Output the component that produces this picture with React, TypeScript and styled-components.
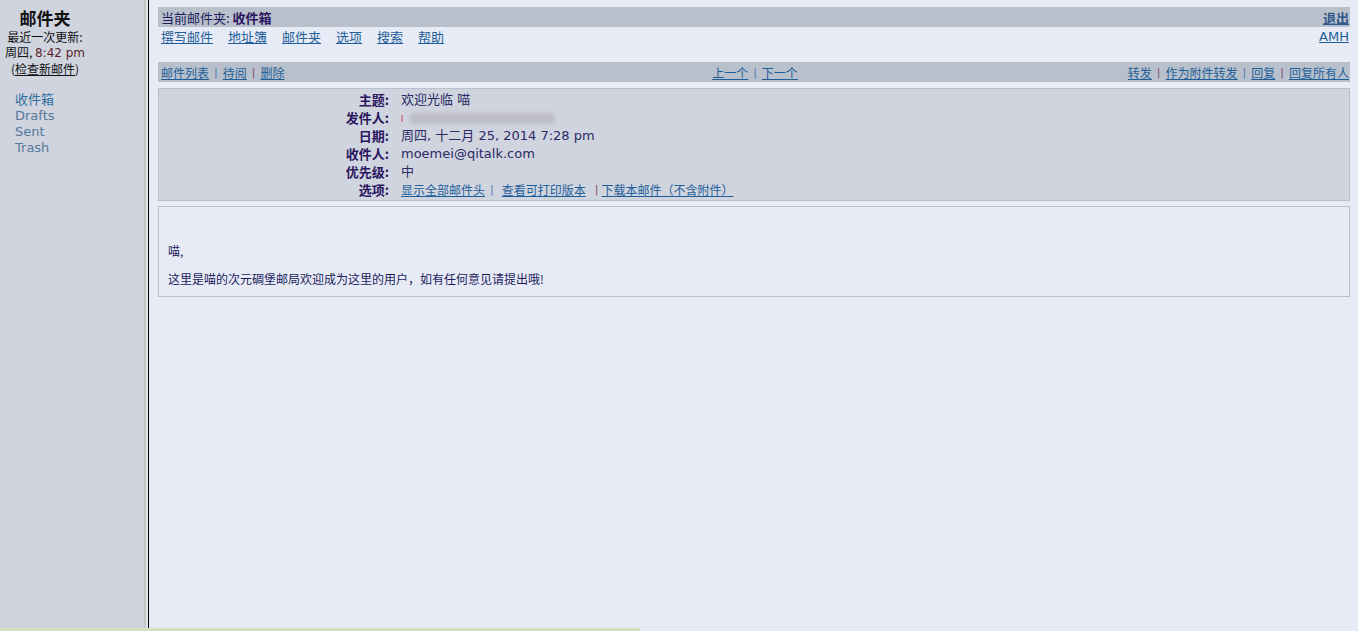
import React from "react";
import styled, { createGlobalStyle } from "styled-components";

const GlobalStyle = createGlobalStyle`
  html, body {
    margin: 0;
    padding: 0;
    background: #e7ebf6;
    font-family: "DejaVu Sans", "Noto Sans CJK SC", sans-serif;
    font-size: 13px;
    color: #1c1c5c;
  }
  #root {
    height: 100vh;
  }
`;

const Page = styled.div`
  display: flex;
  height: 100vh;
  position: relative;
  overflow: hidden;
`;

const Sidebar = styled.div`
  width: 144px;
  flex-shrink: 0;
  background: #cfd4df;
  border-right: 2px solid #c6c6c6;
  box-sizing: content-box;
  display: flex;
  flex-direction: column;
`;

const Divider = styled.div`
  width: 3px;
  flex-shrink: 0;
  background: #e7ebf6;
  border-left: 1px solid #e1e1e1;
  border-right: 1px solid #000;
  box-sizing: border-box;
`;

const SideHead = styled.div`
  width: 90px;
  display: flex;
  flex-direction: column;
  align-items: center;
`;

const SideTitle = styled.div`
  font-family: "Noto Sans CJK SC", sans-serif;
  font-weight: 700;
  font-size: 17px;
  color: #111;
  padding-top: 7px;
  line-height: 22px;
`;

const SideInfo = styled.div`
  text-align: center;
  font-size: 12px;
  line-height: 15px;
  color: #111;
  font-family: "Noto Sans CJK SC", sans-serif;
  white-space: nowrap;
`;

const Time = styled.span`
  color: #5b1f2a;
  font-family: "DejaVu Sans", sans-serif;
`;

const Check = styled.a`
  color: #111;
  text-decoration: underline;
`;

const FolderList = styled.div`
  display: flex;
  flex-direction: column;
  padding: 16px 0 0 15px;
`;

const Folder = styled.a<{ $current?: boolean }>`
  color: ${(p) => (p.$current ? "#2f6ea0" : "#55789a")};
  font-size: 13px;
  line-height: 16px;
  text-decoration: none;
  font-family: "DejaVu Sans", "Noto Sans CJK SC", sans-serif;
`;

const Main = styled.div`
  flex: 1;
  padding: 7px 8px 0 9px;
  display: flex;
  flex-direction: column;
  min-width: 0;
`;

const TitleBar = styled.div`
  background: #b8c0cb;
  height: 20px;
  display: flex;
  align-items: center;
  justify-content: space-between;
  padding: 0 1px 0 3px;
  font-family: "Noto Sans CJK SC", sans-serif;
  font-size: 13px;
  color: #1c1c5c;
`;

const Current = styled.b`
  color: #2a1660;
`;

const Logout = styled.a`
  font-weight: 700;
  color: #2f5788;
  text-decoration: underline;
  font-size: 13px;
`;

const MenuRow = styled.div`
  display: flex;
  justify-content: space-between;
  padding: 2px 1px 0 3px;
  height: 33px;
  font-family: "Noto Sans CJK SC", sans-serif;
  font-size: 13px;
`;

const MenuLinks = styled.div`
  display: flex;
  gap: 15px;
  height: 16px;
  line-height: 16px;
`;

const Link = styled.a`
  color: #1f5f99;
  text-decoration: underline;
  cursor: pointer;
`;

const AmhLink = styled(Link)`
  font-family: "DejaVu Sans", sans-serif;
  font-size: 13px;
`;

const NavBar = styled.div`
  background: #b8c0cb;
  height: 20px;
  display: grid;
  grid-template-columns: 1fr auto 1fr;
  align-items: center;
  padding: 0 1px 0 3px;
  font-family: "Noto Sans CJK SC", sans-serif;
  font-size: 12px;
`;

const NavGroup = styled.div<{ $align: string }>`
  display: flex;
  justify-content: ${(p) => p.$align};
  align-items: center;
  white-space: nowrap;
`;

const Sep = styled.span<{ $tone?: "blue" | "red"; $l?: number; $r?: number }>`
  color: ${(p) => (p.$tone === "red" ? "#8a4a6a" : "#4a7ab0")};
  margin: 0 ${(p) => p.$r ?? 5}px 0 ${(p) => p.$l ?? 5}px;
  font-family: "DejaVu Sans", sans-serif;
  font-size: 11px;
`;

const HeaderBox = styled.div`
  margin-top: 6px;
  background: #d0d4df;
  border: 1px solid #b9bfcc;
  padding: 2px 0 1px 0;
  display: grid;
  grid-template-columns: 230px 1fr;
  column-gap: 12px;
`;

const Label = styled.div`
  text-align: right;
  font-weight: 700;
  font-family: "Noto Sans CJK SC", sans-serif;
  font-size: 13px;
  color: #2a1660;
  line-height: 18px;
`;

const Value = styled.div`
  font-size: 13px;
  line-height: 18px;
  color: #2a2a66;
  font-family: "DejaVu Sans", "Noto Sans CJK SC", sans-serif;
  white-space: nowrap;
  display: flex;
  align-items: center;
`;

const Blurred = styled.span`
  display: inline-block;
  width: 146px;
  height: 11px;
  margin-left: 6px;
  border-radius: 8px;
  background: #bcbcc4;
  filter: blur(2px);
`;

const RedDot = styled.span`
  display: inline-block;
  width: 2px;
  height: 7px;
  background: #c98a9a;
`;

const OptionLinks = styled.div`
  display: flex;
  align-items: center;
  font-family: "Noto Sans CJK SC", sans-serif;
  font-size: 12px;
`;

const BodyBox = styled.div`
  margin-top: 5px;
  border: 1px solid #b9bfcc;
  background: #e7ebf6;
  padding: 36px 9px 9px 9px;
  font-family: "Noto Sans CJK SC", sans-serif;
  font-size: 12px;
  color: #1c1c5c;
  line-height: 16px;
`;

const Para = styled.p`
  margin: 0 0 12px 0;
  &:last-child {
    margin-bottom: 0;
  }
`;

const StatusStrip = styled.div`
  position: absolute;
  left: 0;
  bottom: 0;
  width: 640px;
  height: 3px;
  background: #d2dfc3;
`;

const headers: { label: string; value: React.ReactNode }[] = [
  { label: "主题:", value: "欢迎光临 喵" },
  {
    label: "发件人:",
    value: (
      <>
        <RedDot />
        <Blurred />
      </>
    ),
  },
  { label: "日期:", value: "周四, 十二月 25, 2014 7:28 pm" },
  { label: "收件人:", value: "moemei@qitalk.com" },
  { label: "优先级:", value: "中" },
];

const App: React.FC = () => {
  return (
    <>
      <GlobalStyle />
      <Page>
        <Sidebar>
          <SideHead>
            <SideTitle>邮件夹</SideTitle>
            <SideInfo>
              最近一次更新:
              <br />
              周四, <Time>8:42 pm</Time>
              <br />
              (<Check>检查新邮件</Check>)
            </SideInfo>
          </SideHead>
          <FolderList>
            <Folder $current>收件箱</Folder>
            <Folder>Drafts</Folder>
            <Folder>Sent</Folder>
            <Folder>Trash</Folder>
          </FolderList>
        </Sidebar>
        <Divider />
        <Main>
          <TitleBar>
            <span>
              当前邮件夹: <Current>收件箱</Current>
            </span>
            <Logout>退出</Logout>
          </TitleBar>
          <MenuRow>
            <MenuLinks>
              <Link>撰写邮件</Link>
              <Link>地址簿</Link>
              <Link>邮件夹</Link>
              <Link>选项</Link>
              <Link>搜索</Link>
              <Link>帮助</Link>
            </MenuLinks>
            <AmhLink>AMH</AmhLink>
          </MenuRow>
          <NavBar>
            <NavGroup $align="flex-start">
              <Link>邮件列表</Link>
              <Sep>|</Sep>
              <Link>待阅</Link>
              <Sep $tone="red">|</Sep>
              <Link>删除</Link>
            </NavGroup>
            <NavGroup $align="center">
              <Link>上一个</Link>
              <Sep>|</Sep>
              <Link>下一个</Link>
            </NavGroup>
            <NavGroup $align="flex-end">
              <Link>转发</Link>
              <Sep $tone="red">|</Sep>
              <Link>作为附件转发</Link>
              <Sep>|</Sep>
              <Link>回复</Link>
              <Sep $tone="red">|</Sep>
              <Link>回复所有人</Link>
            </NavGroup>
          </NavBar>
          <HeaderBox>
            {headers.map((h) => (
              <React.Fragment key={h.label}>
                <Label>{h.label}</Label>
                <Value>{h.value}</Value>
              </React.Fragment>
            ))}
            <Label>选项:</Label>
            <Value>
              <OptionLinks>
                <Link>显示全部邮件头</Link>
                <Sep $l={5} $r={8}>|</Sep>
                <Link>查看可打印版本</Link>
                <Sep $tone="red" $l={9} $r={3}>|</Sep>
                <Link>下载本邮件（不含附件）</Link>
              </OptionLinks>
            </Value>
          </HeaderBox>
          <BodyBox>
            <Para>喵,</Para>
            <Para>这里是喵的次元碉堡邮局欢迎成为这里的用户，如有任何意见请提出哦!</Para>
          </BodyBox>
        </Main>
        <StatusStrip />
      </Page>
    </>
  );
};

export default App;
